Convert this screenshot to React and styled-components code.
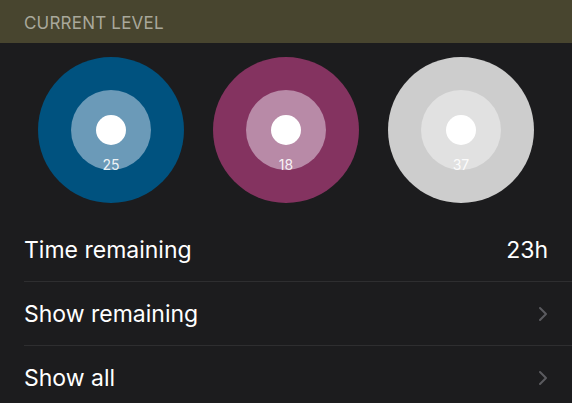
import React from "react";
import styled, { createGlobalStyle } from "styled-components";

const GlobalStyle = createGlobalStyle`
  html, body {
    margin: 0;
    padding: 0;
    background: #1c1c1e;
  }
  body {
    font-family: Inter, "Noto Sans", "Liberation Sans", sans-serif;
    -webkit-font-smoothing: antialiased;
  }
`;

const levels = [
  { value: 25, outer: "#00527f", inner: "#6b9ab8" },
  { value: 18, outer: "#843360", inner: "#b88aa7" },
  { value: 37, outer: "#cdcdcd", inner: "#e1e1e1" },
];

const rows = [
  { label: "Time remaining", detail: "23h" },
  { label: "Show remaining", chevron: true },
  { label: "Show all", chevron: true },
];

export default function App() {
  return (
    <>
      <GlobalStyle />
      <Screen>
        <SectionHeader>CURRENT LEVEL</SectionHeader>
        <Levels>
          {levels.map((l) => (
            <Ring key={l.value} color={l.outer}>
              <InnerRing color={l.inner}>
                <Dot />
              </InnerRing>
              <LevelValue>{l.value}</LevelValue>
            </Ring>
          ))}
        </Levels>
        <List>
          {rows.map((r) => (
            <Row key={r.label}>
              <Label>{r.label}</Label>
              {r.detail && <Detail>{r.detail}</Detail>}
              {r.chevron && (
                <Chevron width="10" height="16" viewBox="0 0 10 16">
                  <path
                    d="M2 2 L8 8 L2 14"
                    fill="none"
                    stroke="#5b5b5f"
                    strokeWidth="2"
                    strokeLinecap="round"
                    strokeLinejoin="round"
                  />
                </Chevron>
              )}
            </Row>
          ))}
        </List>
      </Screen>
    </>
  );
}

const Screen = styled.div`
  width: 572px;
  min-height: 403px;
  background: #1c1c1e;
  overflow: hidden;
`;

const SectionHeader = styled.div`
  height: 43px;
  box-sizing: border-box;
  padding: 13px 24px 0;
  background: #48452f;
  color: #a9a89b;
  font-size: 17px;
  letter-spacing: 0.2px;
`;

const Levels = styled.div`
  display: flex;
  justify-content: center;
  gap: 29px;
  padding: 14px 0 15px;
`;

const Ring = styled.div`
  position: relative;
  width: 146px;
  height: 146px;
  border-radius: 50%;
  background: ${(p) => p.color};
  display: flex;
  align-items: center;
  justify-content: center;
`;

const InnerRing = styled.div`
  width: 80px;
  height: 80px;
  border-radius: 50%;
  background: ${(p) => p.color};
  display: flex;
  align-items: center;
  justify-content: center;
`;

const Dot = styled.div`
  width: 30px;
  height: 30px;
  border-radius: 50%;
  background: #ffffff;
`;

const LevelValue = styled.span`
  position: absolute;
  left: 0;
  right: 0;
  top: 100px;
  text-align: center;
  font-size: 14px;
  line-height: 16px;
  color: rgba(255, 255, 255, 0.9);
`;

const List = styled.div`
  margin-left: 24px;
`;

const Row = styled.div`
  display: flex;
  align-items: center;
  height: 64px;
  box-sizing: border-box;
  padding-right: 24px;
  border-bottom: 1px solid #2e2e30;

  &:last-child {
    border-bottom: none;
  }
`;

const Label = styled.span`
  flex: 1;
  color: #ffffff;
  font-size: 23px;
`;

const Detail = styled.span`
  color: #ffffff;
  font-size: 23px;
`;

const Chevron = styled.svg`
  display: block;
`;
